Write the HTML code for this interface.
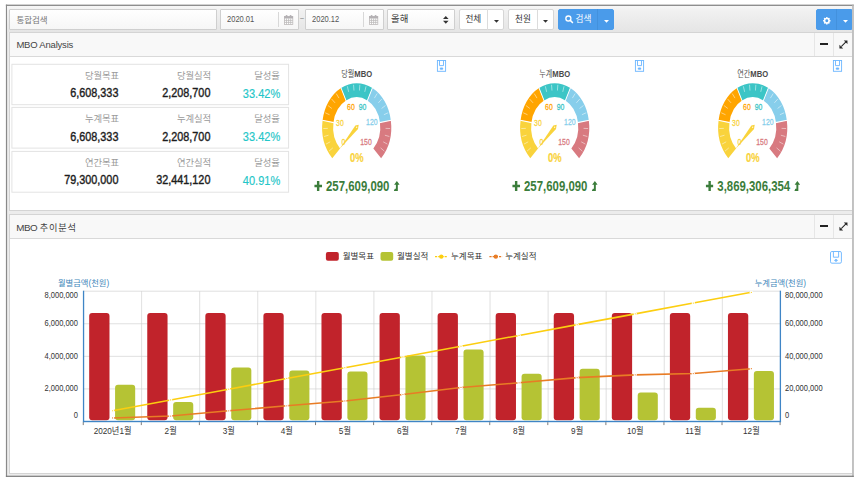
<!DOCTYPE html>
<html lang="ko"><head><meta charset="utf-8"><title>MBO Analysis</title>
<style>
*{box-sizing:border-box;margin:0;padding:0}
html,body{width:856px;height:483px;overflow:hidden;background:#fff}
body{font-family:"Liberation Sans","Noto Sans CJK KR","NanumGothic",sans-serif;color:#333;position:relative}
.abs{position:absolute}
.ic{position:absolute;display:block;overflow:visible}
#topbar{position:absolute;left:7px;top:6px;width:845.4px;height:26.4px;background:linear-gradient(#f7f7f7 0%,#f0f0f0 20%,#e5e5e5 100%)}
.inp{position:absolute;top:8.6px;height:21px;border:1px solid #cfcfcf;background:linear-gradient(#ffffff,#f6f6f6);border-radius:1px}
.t{position:absolute;white-space:nowrap;line-height:1}
.btn{position:absolute;top:9px;height:21px;border:1px solid #d6d6d6;background:#fff;border-radius:2px}
.blue{background:#4a9bea;border-color:#4a9bea}
.panel{position:absolute;left:9px;width:843.2px;background:#fff;border:1px solid #d4d4d4;border-right:0}
.ph{position:absolute;left:0;top:0;right:0;height:24px;background:#f8f8f8;border-bottom:1px solid #d9d9d9}
.tile{position:absolute;left:11.4px;width:277.3px;height:40.6px;border:1px solid #e4e4e4;background:#fff}
.lab{color:#9a9a9a;font-size:9.35px;letter-spacing:-0.1px}
.val{color:#1c1c1c;font-size:12.6px;font-weight:normal;-webkit-text-stroke:0.4px #1c1c1c;transform:scaleX(0.858);transform-origin:100% 0}
.pct{color:#23c6c8;font-size:12.6px;-webkit-text-stroke:0.15px #23c6c8;transform:scaleX(0.875);transform-origin:100% 0}
.r{text-align:right}
.sq{transform:scaleX(0.81);transform-origin:0 0}
.big{position:absolute;top:176.9px;width:200px;text-align:center;font-size:15.2px;font-weight:bold;color:#3b7d3b;white-space:nowrap;line-height:18px;transform:scaleX(0.75);transform-origin:50% 0}
svg text{font-family:"Liberation Sans","Noto Sans CJK KR","NanumGothic",sans-serif}
</style></head><body>
<svg class="abs" style="left:0;top:0" width="856" height="483" viewBox="0 0 856 483">
<rect x="6.4" y="5.2" width="846.6" height="471" fill="#ececec"/>
<rect x="5.9" y="4.6" width="847.9" height="1.4" fill="#8e8e8e"/>
<rect x="5.9" y="4.6" width="1.2" height="472.3" fill="#8a8a8a"/>
<rect x="852.2" y="4.6" width="1.6" height="472.3" fill="#b6b6b6"/>
<rect x="5.9" y="475.7" width="847.9" height="1.2" fill="#7a7a7a"/>
</svg>
<div id="topbar"></div>

<div class="inp" style="left:9.2px;width:207.4px"></div>
<div class="t" style="left:16.4px;top:15.7px;font-size:8.5px;color:#777">통합검색</div>

<div class="inp" style="left:220.3px;width:78.4px"></div>
<div class="t sq" style="left:227.2px;top:15.3px;font-size:9.3px;color:#555">2020.01</div>
<div class="abs" style="left:278.2px;top:12px;width:1px;height:15px;background:#d8d8d8"></div>
<svg class="ic" style="left:283.8px;top:15px" width="9.2" height="9.9" viewBox="0 0 9.2 9.9"><rect x="0.4" y="1.5" width="8.4" height="8" fill="#fff" stroke="#bdbaba" stroke-width="0.8"/><rect x="0.2" y="1.3" width="8.8" height="2.2" fill="#b3b0b3"/><rect x="1.7" y="0" width="1.8" height="2.6" rx="0.8" fill="#b3b0b3"/><rect x="5.7" y="0" width="1.8" height="2.6" rx="0.8" fill="#b3b0b3"/><path d="M0.4,5.4 h8.4 M0.4,7.4 h8.4 M2.5,3.4 v6 M4.6,3.4 v6 M6.7,3.4 v6" stroke="#bdbaba" stroke-width="0.8"/></svg>
<div class="t" style="left:299.7px;top:15.4px;font-size:7.6px;color:#777">~</div>
<div class="inp" style="left:305.3px;width:78.5px"></div>
<div class="t sq" style="left:312.2px;top:15.3px;font-size:9.3px;color:#555">2020.12</div>
<div class="abs" style="left:363.2px;top:12px;width:1px;height:15px;background:#d8d8d8"></div>
<svg class="ic" style="left:368.8px;top:15px" width="9.2" height="9.9" viewBox="0 0 9.2 9.9"><rect x="0.4" y="1.5" width="8.4" height="8" fill="#fff" stroke="#bdbaba" stroke-width="0.8"/><rect x="0.2" y="1.3" width="8.8" height="2.2" fill="#b3b0b3"/><rect x="1.7" y="0" width="1.8" height="2.6" rx="0.8" fill="#b3b0b3"/><rect x="5.7" y="0" width="1.8" height="2.6" rx="0.8" fill="#b3b0b3"/><path d="M0.4,5.4 h8.4 M0.4,7.4 h8.4 M2.5,3.4 v6 M4.6,3.4 v6 M6.7,3.4 v6" stroke="#bdbaba" stroke-width="0.8"/></svg>

<div class="inp" style="left:386.9px;width:68.6px"></div>
<div class="t" style="left:391px;top:13.6px;font-size:9.4px;color:#333">올해</div>
<svg class="ic" style="left:442.8px;top:15.8px" width="5.6" height="7.8" viewBox="0 0 10 14"><path d="M0,5.6 L5,0 L10,5.6 Z M0,8.4 L10,8.4 L5,14 Z" fill="#333"/></svg>

<div class="btn" style="left:458.6px;width:45.8px"></div>
<div class="abs" style="left:487.4px;top:9px;width:1px;height:21px;background:#dcdcdc"></div>
<div class="t" style="left:465.4px;top:15.2px;font-size:8.6px;color:#333">전체</div>
<svg class="ic" style="left:493.6px;top:19.9px" width="5" height="2.8" viewBox="0 0 10 5.6"><path d="M0,0 H10 L5,5.6 Z" fill="#333"/></svg>
<div class="btn" style="left:508.4px;width:45.4px"></div>
<div class="abs" style="left:537.2px;top:9px;width:1px;height:21px;background:#dcdcdc"></div>
<div class="t" style="left:515px;top:15.2px;font-size:8.6px;color:#333">천원</div>
<svg class="ic" style="left:543.2px;top:19.9px" width="5" height="2.8" viewBox="0 0 10 5.6"><path d="M0,0 H10 L5,5.6 Z" fill="#333"/></svg>

<div class="btn blue" style="left:557.8px;width:56.4px;top:8.7px"></div>
<div class="abs" style="left:597.2px;top:8.7px;width:1px;height:21px;background:#4391dd"></div>
<svg class="ic" style="left:564.6px;top:15.4px" width="8.2" height="8.4" viewBox="0 0 16 16"><circle cx="6.6" cy="6.6" r="4.9" fill="none" stroke="#fff" stroke-width="2.6"/><path d="M10.3,10.3 L14.6,14.6" stroke="#fff" stroke-width="3" stroke-linecap="round"/></svg>
<div class="t" style="left:575.6px;top:15.2px;font-size:8.6px;color:#fff">검색</div>
<svg class="ic" style="left:603.5px;top:20.1px" width="5" height="2.8" viewBox="0 0 10 5.6"><path d="M0,0 H10 L5,5.6 Z" fill="#fff"/></svg>

<div class="btn blue" style="left:816.1px;width:36.4px;top:8.7px;border-radius:2px 0 0 2px"></div>
<div class="abs" style="left:836.4px;top:8.7px;width:1px;height:21px;background:#4391dd"></div>
<svg class="ic" style="left:823.1px;top:16.7px" width="7.6" height="7.6" viewBox="-8 -8 16 16"><g fill="#fff"><circle r="6.2"/><g id="tth"><rect x="-1.6" y="-7.8" width="3.2" height="15.6" rx="0.6"/></g><use href="#tth" transform="rotate(45)"/><use href="#tth" transform="rotate(90)"/><use href="#tth" transform="rotate(135)"/></g><circle r="3.1" fill="#4a9bea"/></svg>
<svg class="ic" style="left:842.8px;top:20.2px" width="5" height="2.8" viewBox="0 0 10 5.6"><path d="M0,0 H10 L5,5.6 Z" fill="#fff"/></svg>

<!-- panel 1 -->
<div class="panel" style="top:32.4px;height:178.2px">
 <div class="ph"></div>
</div>
<div class="t" style="left:16.4px;top:40.4px;font-size:9.5px;color:#444;letter-spacing:-0.2px">MBO Analysis</div>
<div class="abs" style="left:814px;top:33px;width:1px;height:23px;background:#e6e6e6"></div>
<div class="abs" style="left:833px;top:33px;width:1px;height:23px;background:#e6e6e6"></div>
<div class="abs" style="left:820.1px;top:43.1px;width:7.6px;height:2.3px;background:#222"></div>
<svg class="ic" style="left:839.1px;top:39.8px" width="8.9" height="8.9" viewBox="0 0 16 16"><path d="M8.6,0.8 H15.2 V7.4 Z M0.8,8.6 V15.2 H7.4 Z M4.2,13.1 L2.9,11.8 L11.8,2.9 L13.1,4.2 Z" fill="#222"/></svg>

<svg class="abs" style="left:0;top:0" width="300" height="200" viewBox="0 0 300 200"><g fill="#fff" stroke="#e3e3e3" stroke-width="1"><rect x="11.9" y="64.3" width="276.7" height="40.4"/><rect x="11.9" y="107.4" width="276.7" height="40.7"/><rect x="11.9" y="151.4" width="276.7" height="40.8"/></g></svg>
<div class="t lab r" style="left:19px;width:99.9px;top:71.8px">당월목표</div>
<div class="t val r" style="left:19px;width:99.4px;top:87.1px">6,608,333</div>
<div class="t lab r" style="left:111px;width:99.9px;top:71.8px">당월실적</div>
<div class="t val r" style="left:111px;width:99.4px;top:87.1px">2,208,700</div>
<div class="t lab r" style="left:180px;width:99.8px;top:71.8px">달성율</div>
<div class="t pct r" style="left:180px;width:100.2px;top:87.8px">33.42%</div>
<div class="t lab r" style="left:19px;width:99.9px;top:115.2px">누계목표</div>
<div class="t val r" style="left:19px;width:99.4px;top:130.5px">6,608,333</div>
<div class="t lab r" style="left:111px;width:99.9px;top:115.2px">누계실적</div>
<div class="t val r" style="left:111px;width:99.4px;top:130.5px">2,208,700</div>
<div class="t lab r" style="left:180px;width:99.8px;top:115.2px">달성율</div>
<div class="t pct r" style="left:180px;width:100.2px;top:131.2px">33.42%</div>
<div class="t lab r" style="left:19px;width:99.9px;top:159.0px">연간목표</div>
<div class="t val r" style="left:19px;width:99.4px;top:174.3px">79,300,000</div>
<div class="t lab r" style="left:111px;width:99.9px;top:159.0px">연간실적</div>
<div class="t val r" style="left:111px;width:99.4px;top:174.3px">32,441,120</div>
<div class="t lab r" style="left:180px;width:99.8px;top:159.0px">달성율</div>
<div class="t pct r" style="left:180px;width:100.2px;top:175.0px">40.91%</div>
<div class="big" style="left:256.6px"><svg width="10.4" height="10" viewBox="0 0 10 10" preserveAspectRatio="none" style="display:inline-block;vertical-align:-0.3px;margin-right:5px"><path d="M3.45,0 H6.55 V3.65 H10 V6.35 H6.55 V10 H3.45 V6.35 H0 V3.65 H3.45 Z" fill="#3b7d3b"/></svg>257,609,090<svg width="7.9" height="10" viewBox="0 0 11 15" preserveAspectRatio="none" style="display:inline-block;vertical-align:-0.3px;margin-left:5.6px"><path d="M0,15 H7.6 V5.8 H11 L5.8,0 L0.6,5.8 H4 V11.8 H2 Z" fill="#3b7d3b"/></svg></div>
<div class="big" style="left:454.5px"><svg width="10.4" height="10" viewBox="0 0 10 10" preserveAspectRatio="none" style="display:inline-block;vertical-align:-0.3px;margin-right:5px"><path d="M3.45,0 H6.55 V3.65 H10 V6.35 H6.55 V10 H3.45 V6.35 H0 V3.65 H3.45 Z" fill="#3b7d3b"/></svg>257,609,090<svg width="7.9" height="10" viewBox="0 0 11 15" preserveAspectRatio="none" style="display:inline-block;vertical-align:-0.3px;margin-left:5.6px"><path d="M0,15 H7.6 V5.8 H11 L5.8,0 L0.6,5.8 H4 V11.8 H2 Z" fill="#3b7d3b"/></svg></div>
<div class="big" style="left:652.5px"><svg width="10.4" height="10" viewBox="0 0 10 10" preserveAspectRatio="none" style="display:inline-block;vertical-align:-0.3px;margin-right:5px"><path d="M3.45,0 H6.55 V3.65 H10 V6.35 H6.55 V10 H3.45 V6.35 H0 V3.65 H3.45 Z" fill="#3b7d3b"/></svg>3,869,306,354<svg width="7.9" height="10" viewBox="0 0 11 15" preserveAspectRatio="none" style="display:inline-block;vertical-align:-0.3px;margin-left:5.6px"><path d="M0,15 H7.6 V5.8 H11 L5.8,0 L0.6,5.8 H4 V11.8 H2 Z" fill="#3b7d3b"/></svg></div>

<!-- panel 2 -->
<div class="panel" style="top:214px;height:260px">
 <div class="ph"></div>
</div>
<div class="t" style="left:16.2px;top:222.6px;font-size:9.8px;color:#444;letter-spacing:-0.45px">MBO <span style="font-size:9.2px;letter-spacing:0.75px;margin-left:0.4px">추이분석</span></div>
<div class="abs" style="left:814px;top:215px;width:1px;height:23px;background:#e6e6e6"></div>
<div class="abs" style="left:833px;top:215px;width:1px;height:23px;background:#e6e6e6"></div>
<div class="abs" style="left:820.1px;top:225.2px;width:7.6px;height:2.3px;background:#222"></div>
<svg class="ic" style="left:839.1px;top:221.8px" width="8.9" height="8.9" viewBox="0 0 16 16"><path d="M8.6,0.8 H15.2 V7.4 Z M0.8,8.6 V15.2 H7.4 Z M4.2,13.1 L2.9,11.8 L11.8,2.9 L13.1,4.2 Z" fill="#222"/></svg>

<svg class="abs" style="left:0;top:0" width="856" height="483" viewBox="0 0 856 483">
<g transform="translate(356.7,127.2) scale(0.785,1)">
<path d="M-31.11,31.11 A44.0,44.0 0 0 1 -43.46,-6.88 L-29.63,-4.69 A30.0,30.0 0 0 0 -21.21,21.21 Z" fill="#f9d33c"/>
<path d="M-43.46,-6.88 A44.0,44.0 0 0 1 -19.98,-39.20 L-13.62,-26.73 A30.0,30.0 0 0 0 -29.63,-4.69 Z" fill="#ffa500"/>
<path d="M-19.98,-39.20 A44.0,44.0 0 0 1 19.98,-39.20 L13.62,-26.73 A30.0,30.0 0 0 0 -13.62,-26.73 Z" fill="#3cc5c6"/>
<path d="M19.98,-39.20 A44.0,44.0 0 0 1 43.46,-6.88 L29.63,-4.69 A30.0,30.0 0 0 0 13.62,-26.73 Z" fill="#87ceeb"/>
<path d="M43.46,-6.88 A44.0,44.0 0 0 1 31.11,31.11 L21.21,21.21 A30.0,30.0 0 0 0 29.63,-4.69 Z" fill="#d87a80"/>
<line x1="-35.23" y1="23.94" x2="-30.44" y2="20.68" stroke="#fff" stroke-width="0.9" opacity="0.6"/>
<line x1="-39.10" y1="16.92" x2="-33.77" y2="14.62" stroke="#fff" stroke-width="0.9" opacity="0.6"/>
<line x1="-41.57" y1="9.29" x2="-35.91" y2="8.03" stroke="#fff" stroke-width="0.9" opacity="0.6"/>
<line x1="-42.58" y1="1.34" x2="-36.78" y2="1.16" stroke="#fff" stroke-width="0.9" opacity="0.6"/>
<line x1="-43.95" y1="-6.96" x2="-29.14" y2="-4.61" stroke="#fff" stroke-width="1.1"/>
<line x1="-40.08" y1="-14.43" x2="-34.62" y2="-12.47" stroke="#fff" stroke-width="0.9" opacity="0.6"/>
<line x1="-36.67" y1="-21.69" x2="-31.68" y2="-18.73" stroke="#fff" stroke-width="0.9" opacity="0.6"/>
<line x1="-31.95" y1="-28.17" x2="-27.60" y2="-24.34" stroke="#fff" stroke-width="0.9" opacity="0.6"/>
<line x1="-26.11" y1="-33.66" x2="-22.55" y2="-29.08" stroke="#fff" stroke-width="0.9" opacity="0.6"/>
<line x1="-20.20" y1="-39.65" x2="-13.39" y2="-26.28" stroke="#fff" stroke-width="1.1"/>
<line x1="-11.89" y1="-40.91" x2="-10.27" y2="-35.34" stroke="#fff" stroke-width="0.9" opacity="0.6"/>
<line x1="-4.01" y1="-42.41" x2="-3.46" y2="-36.64" stroke="#fff" stroke-width="0.9" opacity="0.6"/>
<line x1="4.01" y1="-42.41" x2="3.46" y2="-36.64" stroke="#fff" stroke-width="0.9" opacity="0.6"/>
<line x1="11.89" y1="-40.91" x2="10.27" y2="-35.34" stroke="#fff" stroke-width="0.9" opacity="0.6"/>
<line x1="20.20" y1="-39.65" x2="13.39" y2="-26.28" stroke="#fff" stroke-width="1.1"/>
<line x1="26.11" y1="-33.66" x2="22.55" y2="-29.08" stroke="#fff" stroke-width="0.9" opacity="0.6"/>
<line x1="31.95" y1="-28.17" x2="27.60" y2="-24.34" stroke="#fff" stroke-width="0.9" opacity="0.6"/>
<line x1="36.67" y1="-21.69" x2="31.68" y2="-18.73" stroke="#fff" stroke-width="0.9" opacity="0.6"/>
<line x1="40.08" y1="-14.43" x2="34.62" y2="-12.47" stroke="#fff" stroke-width="0.9" opacity="0.6"/>
<line x1="43.95" y1="-6.96" x2="29.14" y2="-4.61" stroke="#fff" stroke-width="1.1"/>
<line x1="42.58" y1="1.34" x2="36.78" y2="1.16" stroke="#fff" stroke-width="0.9" opacity="0.6"/>
<line x1="41.57" y1="9.29" x2="35.91" y2="8.03" stroke="#fff" stroke-width="0.9" opacity="0.6"/>
<line x1="39.10" y1="16.92" x2="33.77" y2="14.62" stroke="#fff" stroke-width="0.9" opacity="0.6"/>
<line x1="35.23" y1="23.94" x2="30.44" y2="20.68" stroke="#fff" stroke-width="0.9" opacity="0.6"/>
<polygon points="-21.92,21.92 -1.70,-1.70 2.55,-2.55 1.70,1.70" fill="#f9d33c"/>
<circle cx="0" cy="0" r="0.7" fill="#fff"/>
</g>
<text transform="translate(343.4,144.9) scale(0.82,1)" text-anchor="middle" font-size="8.4" fill="#f9d33c" stroke="#f9d33c" stroke-width="0.25">0</text>
<text transform="translate(339.9,125.7) scale(0.82,1)" text-anchor="middle" font-size="8.4" fill="#f9d33c" stroke="#f9d33c" stroke-width="0.25">30</text>
<text transform="translate(350.9,110.3) scale(0.82,1)" text-anchor="middle" font-size="8.4" fill="#ffa500" stroke="#ffa500" stroke-width="0.25">60</text>
<text transform="translate(362.5,110.3) scale(0.82,1)" text-anchor="middle" font-size="8.4" fill="#3cc5c6" stroke="#3cc5c6" stroke-width="0.25">90</text>
<text transform="translate(371.8,125.4) scale(0.82,1)" text-anchor="middle" font-size="8.4" fill="#87ceeb" stroke="#87ceeb" stroke-width="0.25">120</text>
<text transform="translate(366.0,144.9) scale(0.82,1)" text-anchor="middle" font-size="8.4" fill="#d87a80" stroke="#d87a80" stroke-width="0.25">150</text>
<text transform="translate(356.8,162.4) scale(0.785,1)" text-anchor="middle" font-size="12" font-weight="bold" fill="#f9d33c" stroke="#f9d33c" stroke-width="0.2">0%</text>
<text transform="translate(356.7,76.6) scale(0.82,1)" text-anchor="middle" font-size="9.3" font-weight="bold" fill="#4a4a4a"><tspan font-weight="normal" font-size="8.7" fill="#555">당월</tspan>MBO</text><g transform="translate(554.7,127.2) scale(0.785,1)">
<path d="M-31.11,31.11 A44.0,44.0 0 0 1 -43.46,-6.88 L-29.63,-4.69 A30.0,30.0 0 0 0 -21.21,21.21 Z" fill="#f9d33c"/>
<path d="M-43.46,-6.88 A44.0,44.0 0 0 1 -19.98,-39.20 L-13.62,-26.73 A30.0,30.0 0 0 0 -29.63,-4.69 Z" fill="#ffa500"/>
<path d="M-19.98,-39.20 A44.0,44.0 0 0 1 19.98,-39.20 L13.62,-26.73 A30.0,30.0 0 0 0 -13.62,-26.73 Z" fill="#3cc5c6"/>
<path d="M19.98,-39.20 A44.0,44.0 0 0 1 43.46,-6.88 L29.63,-4.69 A30.0,30.0 0 0 0 13.62,-26.73 Z" fill="#87ceeb"/>
<path d="M43.46,-6.88 A44.0,44.0 0 0 1 31.11,31.11 L21.21,21.21 A30.0,30.0 0 0 0 29.63,-4.69 Z" fill="#d87a80"/>
<line x1="-35.23" y1="23.94" x2="-30.44" y2="20.68" stroke="#fff" stroke-width="0.9" opacity="0.6"/>
<line x1="-39.10" y1="16.92" x2="-33.77" y2="14.62" stroke="#fff" stroke-width="0.9" opacity="0.6"/>
<line x1="-41.57" y1="9.29" x2="-35.91" y2="8.03" stroke="#fff" stroke-width="0.9" opacity="0.6"/>
<line x1="-42.58" y1="1.34" x2="-36.78" y2="1.16" stroke="#fff" stroke-width="0.9" opacity="0.6"/>
<line x1="-43.95" y1="-6.96" x2="-29.14" y2="-4.61" stroke="#fff" stroke-width="1.1"/>
<line x1="-40.08" y1="-14.43" x2="-34.62" y2="-12.47" stroke="#fff" stroke-width="0.9" opacity="0.6"/>
<line x1="-36.67" y1="-21.69" x2="-31.68" y2="-18.73" stroke="#fff" stroke-width="0.9" opacity="0.6"/>
<line x1="-31.95" y1="-28.17" x2="-27.60" y2="-24.34" stroke="#fff" stroke-width="0.9" opacity="0.6"/>
<line x1="-26.11" y1="-33.66" x2="-22.55" y2="-29.08" stroke="#fff" stroke-width="0.9" opacity="0.6"/>
<line x1="-20.20" y1="-39.65" x2="-13.39" y2="-26.28" stroke="#fff" stroke-width="1.1"/>
<line x1="-11.89" y1="-40.91" x2="-10.27" y2="-35.34" stroke="#fff" stroke-width="0.9" opacity="0.6"/>
<line x1="-4.01" y1="-42.41" x2="-3.46" y2="-36.64" stroke="#fff" stroke-width="0.9" opacity="0.6"/>
<line x1="4.01" y1="-42.41" x2="3.46" y2="-36.64" stroke="#fff" stroke-width="0.9" opacity="0.6"/>
<line x1="11.89" y1="-40.91" x2="10.27" y2="-35.34" stroke="#fff" stroke-width="0.9" opacity="0.6"/>
<line x1="20.20" y1="-39.65" x2="13.39" y2="-26.28" stroke="#fff" stroke-width="1.1"/>
<line x1="26.11" y1="-33.66" x2="22.55" y2="-29.08" stroke="#fff" stroke-width="0.9" opacity="0.6"/>
<line x1="31.95" y1="-28.17" x2="27.60" y2="-24.34" stroke="#fff" stroke-width="0.9" opacity="0.6"/>
<line x1="36.67" y1="-21.69" x2="31.68" y2="-18.73" stroke="#fff" stroke-width="0.9" opacity="0.6"/>
<line x1="40.08" y1="-14.43" x2="34.62" y2="-12.47" stroke="#fff" stroke-width="0.9" opacity="0.6"/>
<line x1="43.95" y1="-6.96" x2="29.14" y2="-4.61" stroke="#fff" stroke-width="1.1"/>
<line x1="42.58" y1="1.34" x2="36.78" y2="1.16" stroke="#fff" stroke-width="0.9" opacity="0.6"/>
<line x1="41.57" y1="9.29" x2="35.91" y2="8.03" stroke="#fff" stroke-width="0.9" opacity="0.6"/>
<line x1="39.10" y1="16.92" x2="33.77" y2="14.62" stroke="#fff" stroke-width="0.9" opacity="0.6"/>
<line x1="35.23" y1="23.94" x2="30.44" y2="20.68" stroke="#fff" stroke-width="0.9" opacity="0.6"/>
<polygon points="-21.92,21.92 -1.70,-1.70 2.55,-2.55 1.70,1.70" fill="#f9d33c"/>
<circle cx="0" cy="0" r="0.7" fill="#fff"/>
</g>
<text transform="translate(541.4,144.9) scale(0.82,1)" text-anchor="middle" font-size="8.4" fill="#f9d33c" stroke="#f9d33c" stroke-width="0.25">0</text>
<text transform="translate(537.9,125.7) scale(0.82,1)" text-anchor="middle" font-size="8.4" fill="#f9d33c" stroke="#f9d33c" stroke-width="0.25">30</text>
<text transform="translate(548.9,110.3) scale(0.82,1)" text-anchor="middle" font-size="8.4" fill="#ffa500" stroke="#ffa500" stroke-width="0.25">60</text>
<text transform="translate(560.5,110.3) scale(0.82,1)" text-anchor="middle" font-size="8.4" fill="#3cc5c6" stroke="#3cc5c6" stroke-width="0.25">90</text>
<text transform="translate(569.8,125.4) scale(0.82,1)" text-anchor="middle" font-size="8.4" fill="#87ceeb" stroke="#87ceeb" stroke-width="0.25">120</text>
<text transform="translate(564.0,144.9) scale(0.82,1)" text-anchor="middle" font-size="8.4" fill="#d87a80" stroke="#d87a80" stroke-width="0.25">150</text>
<text transform="translate(554.8,162.4) scale(0.785,1)" text-anchor="middle" font-size="12" font-weight="bold" fill="#f9d33c" stroke="#f9d33c" stroke-width="0.2">0%</text>
<text transform="translate(554.7,76.6) scale(0.82,1)" text-anchor="middle" font-size="9.3" font-weight="bold" fill="#4a4a4a"><tspan font-weight="normal" font-size="8.7" fill="#555">누계</tspan>MBO</text><g transform="translate(752.7,127.2) scale(0.785,1)">
<path d="M-31.11,31.11 A44.0,44.0 0 0 1 -43.46,-6.88 L-29.63,-4.69 A30.0,30.0 0 0 0 -21.21,21.21 Z" fill="#f9d33c"/>
<path d="M-43.46,-6.88 A44.0,44.0 0 0 1 -19.98,-39.20 L-13.62,-26.73 A30.0,30.0 0 0 0 -29.63,-4.69 Z" fill="#ffa500"/>
<path d="M-19.98,-39.20 A44.0,44.0 0 0 1 19.98,-39.20 L13.62,-26.73 A30.0,30.0 0 0 0 -13.62,-26.73 Z" fill="#3cc5c6"/>
<path d="M19.98,-39.20 A44.0,44.0 0 0 1 43.46,-6.88 L29.63,-4.69 A30.0,30.0 0 0 0 13.62,-26.73 Z" fill="#87ceeb"/>
<path d="M43.46,-6.88 A44.0,44.0 0 0 1 31.11,31.11 L21.21,21.21 A30.0,30.0 0 0 0 29.63,-4.69 Z" fill="#d87a80"/>
<line x1="-35.23" y1="23.94" x2="-30.44" y2="20.68" stroke="#fff" stroke-width="0.9" opacity="0.6"/>
<line x1="-39.10" y1="16.92" x2="-33.77" y2="14.62" stroke="#fff" stroke-width="0.9" opacity="0.6"/>
<line x1="-41.57" y1="9.29" x2="-35.91" y2="8.03" stroke="#fff" stroke-width="0.9" opacity="0.6"/>
<line x1="-42.58" y1="1.34" x2="-36.78" y2="1.16" stroke="#fff" stroke-width="0.9" opacity="0.6"/>
<line x1="-43.95" y1="-6.96" x2="-29.14" y2="-4.61" stroke="#fff" stroke-width="1.1"/>
<line x1="-40.08" y1="-14.43" x2="-34.62" y2="-12.47" stroke="#fff" stroke-width="0.9" opacity="0.6"/>
<line x1="-36.67" y1="-21.69" x2="-31.68" y2="-18.73" stroke="#fff" stroke-width="0.9" opacity="0.6"/>
<line x1="-31.95" y1="-28.17" x2="-27.60" y2="-24.34" stroke="#fff" stroke-width="0.9" opacity="0.6"/>
<line x1="-26.11" y1="-33.66" x2="-22.55" y2="-29.08" stroke="#fff" stroke-width="0.9" opacity="0.6"/>
<line x1="-20.20" y1="-39.65" x2="-13.39" y2="-26.28" stroke="#fff" stroke-width="1.1"/>
<line x1="-11.89" y1="-40.91" x2="-10.27" y2="-35.34" stroke="#fff" stroke-width="0.9" opacity="0.6"/>
<line x1="-4.01" y1="-42.41" x2="-3.46" y2="-36.64" stroke="#fff" stroke-width="0.9" opacity="0.6"/>
<line x1="4.01" y1="-42.41" x2="3.46" y2="-36.64" stroke="#fff" stroke-width="0.9" opacity="0.6"/>
<line x1="11.89" y1="-40.91" x2="10.27" y2="-35.34" stroke="#fff" stroke-width="0.9" opacity="0.6"/>
<line x1="20.20" y1="-39.65" x2="13.39" y2="-26.28" stroke="#fff" stroke-width="1.1"/>
<line x1="26.11" y1="-33.66" x2="22.55" y2="-29.08" stroke="#fff" stroke-width="0.9" opacity="0.6"/>
<line x1="31.95" y1="-28.17" x2="27.60" y2="-24.34" stroke="#fff" stroke-width="0.9" opacity="0.6"/>
<line x1="36.67" y1="-21.69" x2="31.68" y2="-18.73" stroke="#fff" stroke-width="0.9" opacity="0.6"/>
<line x1="40.08" y1="-14.43" x2="34.62" y2="-12.47" stroke="#fff" stroke-width="0.9" opacity="0.6"/>
<line x1="43.95" y1="-6.96" x2="29.14" y2="-4.61" stroke="#fff" stroke-width="1.1"/>
<line x1="42.58" y1="1.34" x2="36.78" y2="1.16" stroke="#fff" stroke-width="0.9" opacity="0.6"/>
<line x1="41.57" y1="9.29" x2="35.91" y2="8.03" stroke="#fff" stroke-width="0.9" opacity="0.6"/>
<line x1="39.10" y1="16.92" x2="33.77" y2="14.62" stroke="#fff" stroke-width="0.9" opacity="0.6"/>
<line x1="35.23" y1="23.94" x2="30.44" y2="20.68" stroke="#fff" stroke-width="0.9" opacity="0.6"/>
<polygon points="-21.92,21.92 -1.70,-1.70 2.55,-2.55 1.70,1.70" fill="#f9d33c"/>
<circle cx="0" cy="0" r="0.7" fill="#fff"/>
</g>
<text transform="translate(739.4,144.9) scale(0.82,1)" text-anchor="middle" font-size="8.4" fill="#f9d33c" stroke="#f9d33c" stroke-width="0.25">0</text>
<text transform="translate(735.9,125.7) scale(0.82,1)" text-anchor="middle" font-size="8.4" fill="#f9d33c" stroke="#f9d33c" stroke-width="0.25">30</text>
<text transform="translate(746.9,110.3) scale(0.82,1)" text-anchor="middle" font-size="8.4" fill="#ffa500" stroke="#ffa500" stroke-width="0.25">60</text>
<text transform="translate(758.5,110.3) scale(0.82,1)" text-anchor="middle" font-size="8.4" fill="#3cc5c6" stroke="#3cc5c6" stroke-width="0.25">90</text>
<text transform="translate(767.8,125.4) scale(0.82,1)" text-anchor="middle" font-size="8.4" fill="#87ceeb" stroke="#87ceeb" stroke-width="0.25">120</text>
<text transform="translate(762.0,144.9) scale(0.82,1)" text-anchor="middle" font-size="8.4" fill="#d87a80" stroke="#d87a80" stroke-width="0.25">150</text>
<text transform="translate(752.8,162.4) scale(0.785,1)" text-anchor="middle" font-size="12" font-weight="bold" fill="#f9d33c" stroke="#f9d33c" stroke-width="0.2">0%</text>
<text transform="translate(752.7,76.6) scale(0.82,1)" text-anchor="middle" font-size="9.3" font-weight="bold" fill="#4a4a4a"><tspan font-weight="normal" font-size="8.7" fill="#555">연간</tspan>MBO</text><g transform="translate(436.9,60.0)" fill="none" stroke="#1e90ff" stroke-width="0.9" opacity="0.65"><rect x="0.5" y="0.5" width="8.2" height="10.8"/><path d="M2.6,0.5 V5.6 H6.6 V0.5"/><path d="M3.4,8.0 H5.8 V9.2 H3.4 Z" fill="#1e90ff"/></g><g transform="translate(634.9,60.0)" fill="none" stroke="#1e90ff" stroke-width="0.9" opacity="0.65"><rect x="0.5" y="0.5" width="8.2" height="10.8"/><path d="M2.6,0.5 V5.6 H6.6 V0.5"/><path d="M3.4,8.0 H5.8 V9.2 H3.4 Z" fill="#1e90ff"/></g><g transform="translate(832.9,60.0)" fill="none" stroke="#1e90ff" stroke-width="0.9" opacity="0.65"><rect x="0.5" y="0.5" width="8.2" height="10.8"/><path d="M2.6,0.5 V5.6 H6.6 V0.5"/><path d="M3.4,8.0 H5.8 V9.2 H3.4 Z" fill="#1e90ff"/></g><g transform="translate(830.0,251.0)" fill="none" stroke="#1e90ff" stroke-width="1" opacity="0.6"><rect x="0.5" y="0.5" width="10.9" height="11.7" rx="1.4"/><path d="M3.4,0.5 V6.2 H8.6 V0.5"/><ellipse cx="6" cy="9.4" rx="1.3" ry="0.8" fill="#1e90ff"/></g><line x1="83.55" y1="388.93" x2="780.39" y2="388.93" stroke="#cfcfcf" stroke-width="0.65"/>
<line x1="83.55" y1="356.35" x2="780.39" y2="356.35" stroke="#cfcfcf" stroke-width="0.65"/>
<line x1="83.55" y1="323.77" x2="780.39" y2="323.77" stroke="#cfcfcf" stroke-width="0.65"/>
<line x1="83.55" y1="291.20" x2="780.39" y2="291.20" stroke="#cfcfcf" stroke-width="0.65"/>
<line x1="141.62" y1="291.2" x2="141.62" y2="421.5" stroke="#cfcfcf" stroke-width="0.65"/>
<line x1="199.69" y1="291.2" x2="199.69" y2="421.5" stroke="#cfcfcf" stroke-width="0.65"/>
<line x1="257.76" y1="291.2" x2="257.76" y2="421.5" stroke="#cfcfcf" stroke-width="0.65"/>
<line x1="315.83" y1="291.2" x2="315.83" y2="421.5" stroke="#cfcfcf" stroke-width="0.65"/>
<line x1="373.90" y1="291.2" x2="373.90" y2="421.5" stroke="#cfcfcf" stroke-width="0.65"/>
<line x1="431.97" y1="291.2" x2="431.97" y2="421.5" stroke="#cfcfcf" stroke-width="0.65"/>
<line x1="490.04" y1="291.2" x2="490.04" y2="421.5" stroke="#cfcfcf" stroke-width="0.65"/>
<line x1="548.11" y1="291.2" x2="548.11" y2="421.5" stroke="#cfcfcf" stroke-width="0.65"/>
<line x1="606.18" y1="291.2" x2="606.18" y2="421.5" stroke="#cfcfcf" stroke-width="0.65"/>
<line x1="664.25" y1="291.2" x2="664.25" y2="421.5" stroke="#cfcfcf" stroke-width="0.65"/>
<line x1="722.32" y1="291.2" x2="722.32" y2="421.5" stroke="#cfcfcf" stroke-width="0.65"/>
<rect x="89.19" y="312.97" width="20.3" height="107.23" rx="3" fill="#c1232b"/>
<rect x="115.08" y="384.63" width="20.1" height="35.57" rx="3" fill="#b5c334"/>
<rect x="147.25" y="312.97" width="20.3" height="107.23" rx="3" fill="#c1232b"/>
<rect x="173.16" y="401.95" width="20.1" height="18.25" rx="3" fill="#b5c334"/>
<rect x="205.33" y="312.97" width="20.3" height="107.23" rx="3" fill="#c1232b"/>
<rect x="231.23" y="367.50" width="20.1" height="52.70" rx="3" fill="#b5c334"/>
<rect x="263.40" y="312.97" width="20.3" height="107.23" rx="3" fill="#c1232b"/>
<rect x="289.30" y="370.60" width="20.1" height="49.60" rx="3" fill="#b5c334"/>
<rect x="321.47" y="312.97" width="20.3" height="107.23" rx="3" fill="#c1232b"/>
<rect x="347.37" y="371.41" width="20.1" height="48.79" rx="3" fill="#b5c334"/>
<rect x="379.54" y="312.97" width="20.3" height="107.23" rx="3" fill="#c1232b"/>
<rect x="405.44" y="355.45" width="20.1" height="64.75" rx="3" fill="#b5c334"/>
<rect x="437.61" y="312.97" width="20.3" height="107.23" rx="3" fill="#c1232b"/>
<rect x="463.50" y="349.59" width="20.1" height="70.61" rx="3" fill="#b5c334"/>
<rect x="495.67" y="312.97" width="20.3" height="107.23" rx="3" fill="#c1232b"/>
<rect x="521.57" y="373.85" width="20.1" height="46.35" rx="3" fill="#b5c334"/>
<rect x="553.75" y="312.97" width="20.3" height="107.23" rx="3" fill="#c1232b"/>
<rect x="579.64" y="368.81" width="20.1" height="51.39" rx="3" fill="#b5c334"/>
<rect x="611.81" y="312.97" width="20.3" height="107.23" rx="3" fill="#c1232b"/>
<rect x="637.71" y="392.59" width="20.1" height="27.61" rx="3" fill="#b5c334"/>
<rect x="669.88" y="312.97" width="20.3" height="107.23" rx="3" fill="#c1232b"/>
<rect x="695.78" y="407.73" width="20.1" height="12.47" rx="3" fill="#b5c334"/>
<rect x="727.95" y="312.97" width="20.3" height="107.23" rx="3" fill="#c1232b"/>
<rect x="753.85" y="371.09" width="20.1" height="49.11" rx="3" fill="#b5c334"/>
<polyline fill="none" stroke="#fcce10" stroke-width="1.55" points="112.58,410.74 170.66,399.97 228.73,389.21 286.80,378.45 344.87,367.68 402.94,356.92 461.00,346.16 519.07,335.39 577.14,324.63 635.21,313.87 693.28,303.10 751.35,292.34"/>
<circle cx="112.58" cy="410.74" r="1.7" fill="#fff"/><circle cx="112.58" cy="410.74" r="0.6" fill="#fcce10"/>
<circle cx="170.66" cy="399.97" r="1.7" fill="#fff"/><circle cx="170.66" cy="399.97" r="0.6" fill="#fcce10"/>
<circle cx="228.73" cy="389.21" r="1.7" fill="#fff"/><circle cx="228.73" cy="389.21" r="0.6" fill="#fcce10"/>
<circle cx="286.80" cy="378.45" r="1.7" fill="#fff"/><circle cx="286.80" cy="378.45" r="0.6" fill="#fcce10"/>
<circle cx="344.87" cy="367.68" r="1.7" fill="#fff"/><circle cx="344.87" cy="367.68" r="0.6" fill="#fcce10"/>
<circle cx="402.94" cy="356.92" r="1.7" fill="#fff"/><circle cx="402.94" cy="356.92" r="0.6" fill="#fcce10"/>
<circle cx="461.00" cy="346.16" r="1.7" fill="#fff"/><circle cx="461.00" cy="346.16" r="0.6" fill="#fcce10"/>
<circle cx="519.07" cy="335.39" r="1.7" fill="#fff"/><circle cx="519.07" cy="335.39" r="0.6" fill="#fcce10"/>
<circle cx="577.14" cy="324.63" r="1.7" fill="#fff"/><circle cx="577.14" cy="324.63" r="0.6" fill="#fcce10"/>
<circle cx="635.21" cy="313.87" r="1.7" fill="#fff"/><circle cx="635.21" cy="313.87" r="0.6" fill="#fcce10"/>
<circle cx="693.28" cy="303.10" r="1.7" fill="#fff"/><circle cx="693.28" cy="303.10" r="0.6" fill="#fcce10"/>
<circle cx="751.35" cy="292.34" r="1.7" fill="#fff"/><circle cx="751.35" cy="292.34" r="0.6" fill="#fcce10"/>
<polyline fill="none" stroke="#e87c25" stroke-width="1.55" points="112.58,417.93 170.66,416.07 228.73,410.80 286.80,405.84 344.87,400.95 402.94,394.48 461.00,387.43 519.07,382.78 577.14,377.64 635.21,374.86 693.28,373.58 751.35,368.66"/>
<circle cx="112.58" cy="417.93" r="1.7" fill="#fff"/><circle cx="112.58" cy="417.93" r="0.6" fill="#e87c25"/>
<circle cx="170.66" cy="416.07" r="1.7" fill="#fff"/><circle cx="170.66" cy="416.07" r="0.6" fill="#e87c25"/>
<circle cx="228.73" cy="410.80" r="1.7" fill="#fff"/><circle cx="228.73" cy="410.80" r="0.6" fill="#e87c25"/>
<circle cx="286.80" cy="405.84" r="1.7" fill="#fff"/><circle cx="286.80" cy="405.84" r="0.6" fill="#e87c25"/>
<circle cx="344.87" cy="400.95" r="1.7" fill="#fff"/><circle cx="344.87" cy="400.95" r="0.6" fill="#e87c25"/>
<circle cx="402.94" cy="394.48" r="1.7" fill="#fff"/><circle cx="402.94" cy="394.48" r="0.6" fill="#e87c25"/>
<circle cx="461.00" cy="387.43" r="1.7" fill="#fff"/><circle cx="461.00" cy="387.43" r="0.6" fill="#e87c25"/>
<circle cx="519.07" cy="382.78" r="1.7" fill="#fff"/><circle cx="519.07" cy="382.78" r="0.6" fill="#e87c25"/>
<circle cx="577.14" cy="377.64" r="1.7" fill="#fff"/><circle cx="577.14" cy="377.64" r="0.6" fill="#e87c25"/>
<circle cx="635.21" cy="374.86" r="1.7" fill="#fff"/><circle cx="635.21" cy="374.86" r="0.6" fill="#e87c25"/>
<circle cx="693.28" cy="373.58" r="1.7" fill="#fff"/><circle cx="693.28" cy="373.58" r="0.6" fill="#e87c25"/>
<circle cx="751.35" cy="368.66" r="1.7" fill="#fff"/><circle cx="751.35" cy="368.66" r="0.6" fill="#e87c25"/>
<rect x="82.90" y="290.70" width="1.3" height="131.50" fill="#3f85c6"/>
<rect x="779.74" y="290.70" width="1.3" height="131.50" fill="#3f85c6"/>
<rect x="82.90" y="420.80" width="698.14" height="1.4" fill="#3f85c6"/>
<line x1="83.25" y1="422.2" x2="83.25" y2="425.1" stroke="#444" stroke-width="0.7"/>
<line x1="141.32" y1="422.2" x2="141.32" y2="425.1" stroke="#444" stroke-width="0.7"/>
<line x1="199.39" y1="422.2" x2="199.39" y2="425.1" stroke="#444" stroke-width="0.7"/>
<line x1="257.46" y1="422.2" x2="257.46" y2="425.1" stroke="#444" stroke-width="0.7"/>
<line x1="315.53" y1="422.2" x2="315.53" y2="425.1" stroke="#444" stroke-width="0.7"/>
<line x1="373.60" y1="422.2" x2="373.60" y2="425.1" stroke="#444" stroke-width="0.7"/>
<line x1="431.67" y1="422.2" x2="431.67" y2="425.1" stroke="#444" stroke-width="0.7"/>
<line x1="489.74" y1="422.2" x2="489.74" y2="425.1" stroke="#444" stroke-width="0.7"/>
<line x1="547.81" y1="422.2" x2="547.81" y2="425.1" stroke="#444" stroke-width="0.7"/>
<line x1="605.88" y1="422.2" x2="605.88" y2="425.1" stroke="#444" stroke-width="0.7"/>
<line x1="663.95" y1="422.2" x2="663.95" y2="425.1" stroke="#444" stroke-width="0.7"/>
<line x1="722.02" y1="422.2" x2="722.02" y2="425.1" stroke="#444" stroke-width="0.7"/>
<line x1="780.09" y1="422.2" x2="780.09" y2="425.1" stroke="#444" stroke-width="0.7"/>
<text transform="translate(77.95,418.00) scale(0.835,1)" text-anchor="end" font-size="9.0" fill="#333">0</text>
<text transform="translate(784.99,418.00) scale(0.835,1)" text-anchor="start" font-size="9.0" fill="#333">0</text>
<text transform="translate(77.95,391.23) scale(0.835,1)" text-anchor="end" font-size="9.0" fill="#333">2,000,000</text>
<text transform="translate(784.99,391.23) scale(0.835,1)" text-anchor="start" font-size="9.0" fill="#333">20,000,000</text>
<text transform="translate(77.95,358.65) scale(0.835,1)" text-anchor="end" font-size="9.0" fill="#333">4,000,000</text>
<text transform="translate(784.99,358.65) scale(0.835,1)" text-anchor="start" font-size="9.0" fill="#333">40,000,000</text>
<text transform="translate(77.95,326.07) scale(0.835,1)" text-anchor="end" font-size="9.0" fill="#333">6,000,000</text>
<text transform="translate(784.99,326.07) scale(0.835,1)" text-anchor="start" font-size="9.0" fill="#333">60,000,000</text>
<text transform="translate(77.95,297.90) scale(0.835,1)" text-anchor="end" font-size="9.0" fill="#333">8,000,000</text>
<text transform="translate(784.99,297.90) scale(0.835,1)" text-anchor="start" font-size="9.0" fill="#333">80,000,000</text>
<text transform="translate(112.58,433.50) scale(0.91,1)" text-anchor="middle" font-size="9.0" fill="#333">2020년1월</text>
<text transform="translate(170.66,433.50) scale(0.91,1)" text-anchor="middle" font-size="9.0" fill="#333">2월</text>
<text transform="translate(228.73,433.50) scale(0.91,1)" text-anchor="middle" font-size="9.0" fill="#333">3월</text>
<text transform="translate(286.80,433.50) scale(0.91,1)" text-anchor="middle" font-size="9.0" fill="#333">4월</text>
<text transform="translate(344.87,433.50) scale(0.91,1)" text-anchor="middle" font-size="9.0" fill="#333">5월</text>
<text transform="translate(402.94,433.50) scale(0.91,1)" text-anchor="middle" font-size="9.0" fill="#333">6월</text>
<text transform="translate(461.00,433.50) scale(0.91,1)" text-anchor="middle" font-size="9.0" fill="#333">7월</text>
<text transform="translate(519.07,433.50) scale(0.91,1)" text-anchor="middle" font-size="9.0" fill="#333">8월</text>
<text transform="translate(577.14,433.50) scale(0.91,1)" text-anchor="middle" font-size="9.0" fill="#333">9월</text>
<text transform="translate(635.21,433.50) scale(0.91,1)" text-anchor="middle" font-size="9.0" fill="#333">10월</text>
<text transform="translate(693.28,433.50) scale(0.91,1)" text-anchor="middle" font-size="9.0" fill="#333">11월</text>
<text transform="translate(751.35,433.50) scale(0.91,1)" text-anchor="middle" font-size="9.0" fill="#333">12월</text>
<text x="83.55" y="286.4" text-anchor="middle" font-size="8.3" fill="#4488bb">월별금액(천원)</text>
<text x="780.39" y="286.4" text-anchor="middle" font-size="8.3" fill="#4488bb">누계금액(천원)</text>
<rect x="325.9" y="252.1" width="12.9" height="8.6" rx="2" fill="#c1232b"/>
<text x="342.7" y="258.7" font-size="8.5" fill="#333">월별목표</text>
<rect x="380.5" y="252.1" width="12.7" height="8.6" rx="2" fill="#b5c334"/>
<text x="397.0" y="258.7" font-size="8.5" fill="#333">월별실적</text>
<line x1="435" y1="256.6" x2="447.7" y2="256.6" stroke="#fcce10" stroke-width="1.1" stroke-dasharray="2.2,1"/><circle cx="441.3" cy="256.6" r="2.2" fill="#fcce10"/>
<text x="451.0" y="258.7" font-size="8.5" fill="#333">누계목표</text>
<line x1="489.4" y1="256.6" x2="502.3" y2="256.6" stroke="#e87c25" stroke-width="1.1" stroke-dasharray="2.2,1"/><circle cx="495.8" cy="256.6" r="2.2" fill="#e87c25"/>
<text x="505.2" y="258.7" font-size="8.5" fill="#333">누계실적</text></svg>
</body></html>
